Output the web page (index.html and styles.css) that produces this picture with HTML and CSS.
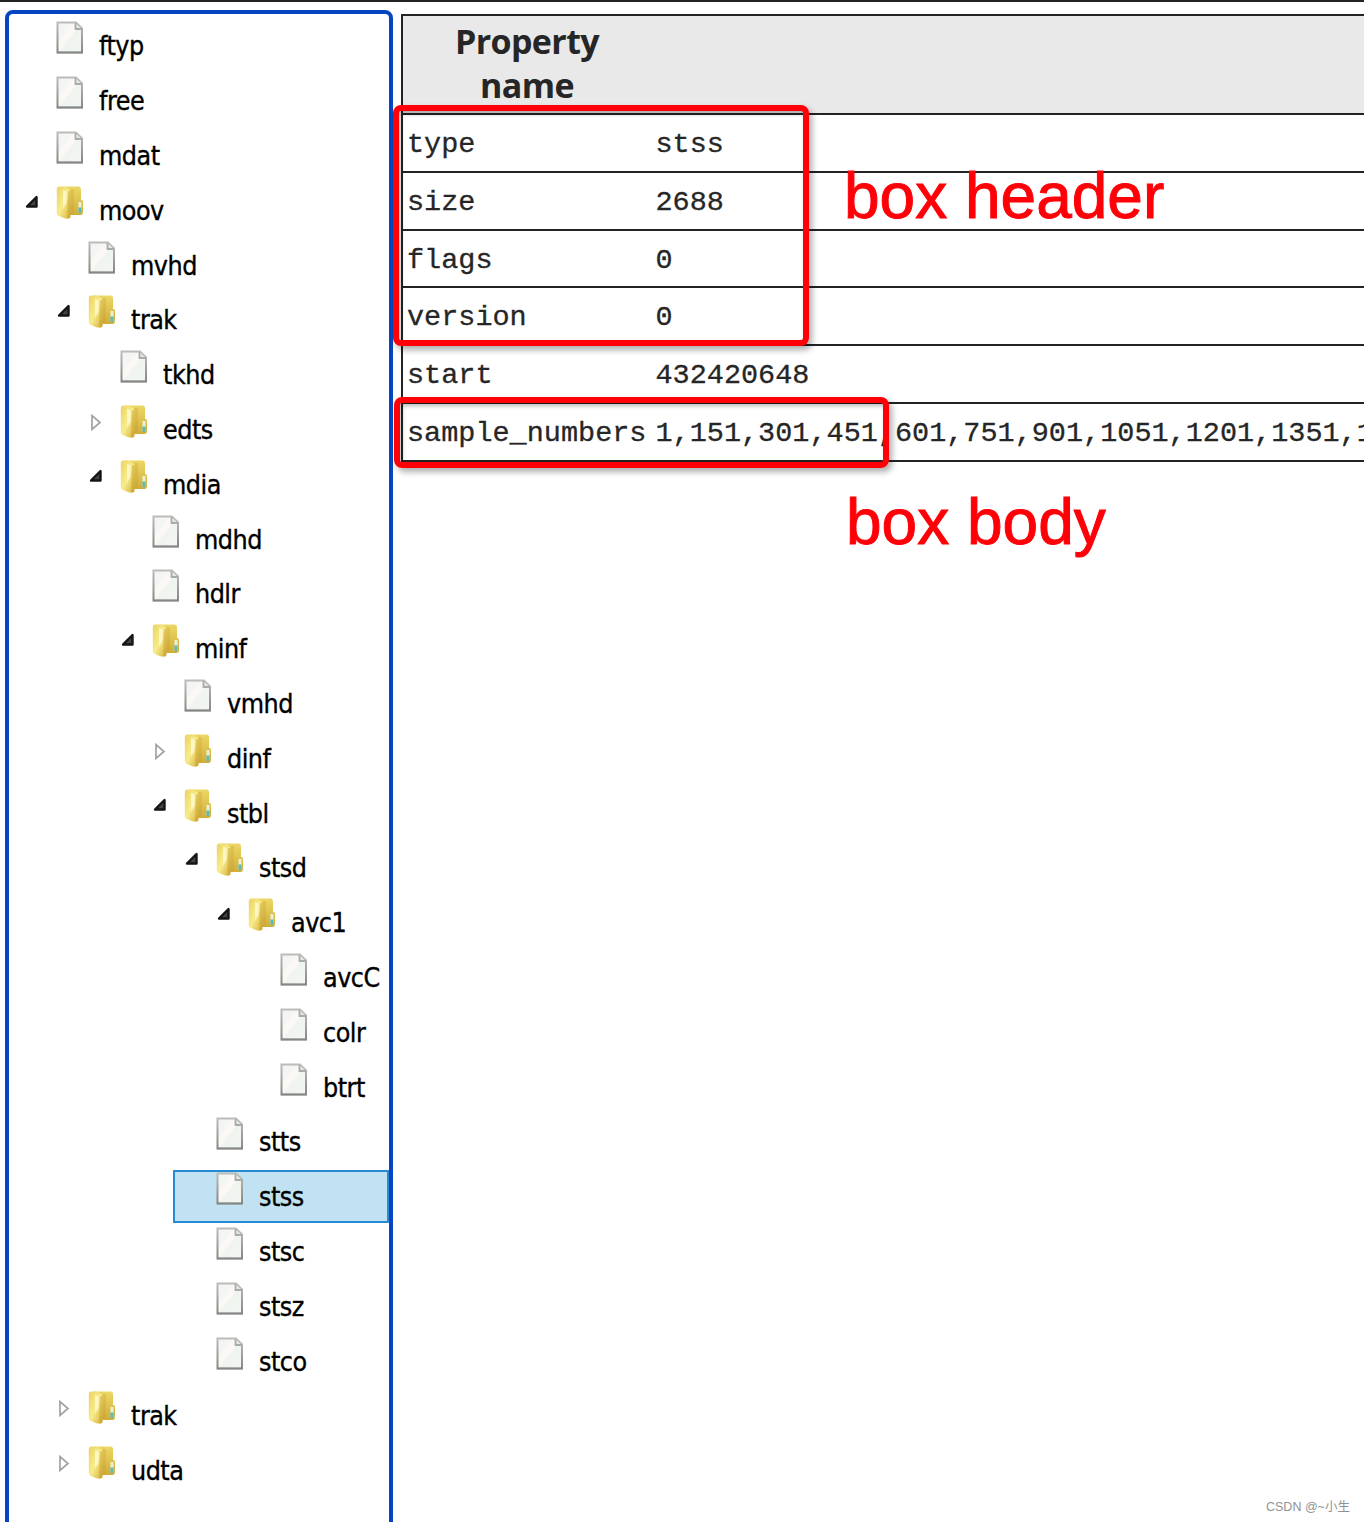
FILE: index.html
```html
<!DOCTYPE html>
<html lang="en">
<head>
<meta charset="utf-8">
<title>MP4 box viewer</title>
<link rel="stylesheet" href="styles.css">
</head>
<body>
<svg width="0" height="0" class="defs">
  <defs>
    <linearGradient id="paper" x1="0" y1="0" x2="1" y2="1"><stop offset="0" stop-color="#f1f5f1"/><stop offset=".3" stop-color="#f3f6f3"/><stop offset=".38" stop-color="#fcf8f5"/><stop offset=".48" stop-color="#fbf8f5"/><stop offset=".54" stop-color="#eff4ef"/><stop offset="1" stop-color="#f3f7f3"/></linearGradient>
    <linearGradient id="edge" x1="0" y1="0" x2="0" y2="1"><stop offset="0" stop-color="#babdba"/><stop offset="1" stop-color="#868886"/></linearGradient>
    <linearGradient id="front" x1="0" y1="0" x2="1" y2="1"><stop offset="0" stop-color="#ecd263"/><stop offset=".5" stop-color="#f6ec8c"/><stop offset="1" stop-color="#d6ae38"/></linearGradient>
    <linearGradient id="back" x1="0" y1="0" x2="0" y2="1"><stop offset="0" stop-color="#edd765"/><stop offset="1" stop-color="#d0ad38"/></linearGradient>
    <symbol id="file" viewBox="0 0 28 34">
      <path d="M1.5 1.5H20L26 7.5V31.5H1.5Z" fill="url(#paper)" stroke="url(#edge)" stroke-width="2"/>
      <path d="M1 31.5H26.5" stroke="#858785" stroke-width="1.6"/>
      <path d="M19.5 2V8H26" fill="#e4e7e4" stroke="#a9aca9" stroke-width="1.8"/>
    </symbol>
    <symbol id="folder" viewBox="0 0 28 34">
      <path d="M5 .5H23Q25 .5 25 3V14H25.500Q27 14 27 16V25.500Q27 29 24.500 29H11V2Z" fill="url(#back)"/>
      <path d="M14 3H18V28H14Z" fill="#c79b2c" opacity=".28"/>
      <path d="M3 .5Q.8 .5 .8 3V27Q.8 29.500 3 30L7.500 32Q14.500 34 14.500 30.500V5Q14.500 3.500 12.500 2.800L8 .5Z" fill="url(#front)"/>
      <path d="M7 4L10.500 5V17L7 23Z" fill="#fffce0" opacity=".7"/>
      <path d="M12 5L14.500 5V31Q13 32.500 11 32Z" fill="#c4952a" opacity=".4"/>
      <path d="M22.500 16H25.500V27H22.500Z" fill="#e9f0d5"/>
      <path d="M22.500 21.500H25.500V27H22.500Z" fill="#5fb9b2"/>
    </symbol>
    <symbol id="open" viewBox="0 0 14 14"><path d="M11.500 2V11.500H2Z" fill="#444" stroke="#151515" stroke-width="2.400" stroke-linejoin="round"/></symbol>
    <symbol id="closed" viewBox="0 0 14 20"><path d="M2 2.500V16.500L10 9.500Z" fill="#fff" stroke="#a2a2a2" stroke-width="1.700"/></symbol>
  </defs>
</svg>
<main class="viewer">
  <nav class="tree">
    <ul>
      <li><div class="row"><i></i><svg class="icon"><use href="#file"/></svg><span>ftyp</span></div></li>
      <li><div class="row"><i></i><svg class="icon"><use href="#file"/></svg><span>free</span></div></li>
      <li><div class="row"><i></i><svg class="icon"><use href="#file"/></svg><span>mdat</span></div></li>
      <li><div class="row"><i><svg class="open"><use href="#open"/></svg></i><svg class="icon"><use href="#folder"/></svg><span>moov</span></div>
        <ul>
          <li><div class="row"><i></i><svg class="icon"><use href="#file"/></svg><span>mvhd</span></div></li>
          <li><div class="row"><i><svg class="open"><use href="#open"/></svg></i><svg class="icon"><use href="#folder"/></svg><span>trak</span></div>
            <ul>
              <li><div class="row"><i></i><svg class="icon"><use href="#file"/></svg><span>tkhd</span></div></li>
              <li><div class="row"><i><svg class="closed"><use href="#closed"/></svg></i><svg class="icon"><use href="#folder"/></svg><span>edts</span></div></li>
              <li><div class="row"><i><svg class="open"><use href="#open"/></svg></i><svg class="icon"><use href="#folder"/></svg><span>mdia</span></div>
                <ul>
                  <li><div class="row"><i></i><svg class="icon"><use href="#file"/></svg><span>mdhd</span></div></li>
                  <li><div class="row"><i></i><svg class="icon"><use href="#file"/></svg><span>hdlr</span></div></li>
                  <li><div class="row"><i><svg class="open"><use href="#open"/></svg></i><svg class="icon"><use href="#folder"/></svg><span>minf</span></div>
                    <ul>
                      <li><div class="row"><i></i><svg class="icon"><use href="#file"/></svg><span>vmhd</span></div></li>
                      <li><div class="row"><i><svg class="closed"><use href="#closed"/></svg></i><svg class="icon"><use href="#folder"/></svg><span>dinf</span></div></li>
                      <li><div class="row"><i><svg class="open"><use href="#open"/></svg></i><svg class="icon"><use href="#folder"/></svg><span>stbl</span></div>
                        <ul>
                          <li><div class="row"><i><svg class="open"><use href="#open"/></svg></i><svg class="icon"><use href="#folder"/></svg><span>stsd</span></div>
                            <ul>
                              <li><div class="row"><i><svg class="open"><use href="#open"/></svg></i><svg class="icon"><use href="#folder"/></svg><span>avc1</span></div>
                                <ul>
                                  <li><div class="row"><i></i><svg class="icon"><use href="#file"/></svg><span>avcC</span></div></li>
                                  <li><div class="row"><i></i><svg class="icon"><use href="#file"/></svg><span>colr</span></div></li>
                                  <li><div class="row"><i></i><svg class="icon"><use href="#file"/></svg><span>btrt</span></div></li>
                                </ul>
                              </li>
                            </ul>
                          </li>
                          <li><div class="row"><i></i><svg class="icon"><use href="#file"/></svg><span>stts</span></div></li>
                          <li><div class="row selected"><i></i><svg class="icon"><use href="#file"/></svg><span>stss</span></div></li>
                          <li><div class="row"><i></i><svg class="icon"><use href="#file"/></svg><span>stsc</span></div></li>
                          <li><div class="row"><i></i><svg class="icon"><use href="#file"/></svg><span>stsz</span></div></li>
                          <li><div class="row"><i></i><svg class="icon"><use href="#file"/></svg><span>stco</span></div></li>
                        </ul>
                      </li>
                    </ul>
                  </li>
                </ul>
              </li>
            </ul>
          </li>
          <li><div class="row"><i><svg class="closed"><use href="#closed"/></svg></i><svg class="icon"><use href="#folder"/></svg><span>trak</span></div></li>
          <li><div class="row"><i><svg class="closed"><use href="#closed"/></svg></i><svg class="icon"><use href="#folder"/></svg><span>udta</span></div></li>
        </ul>
      </li>
    </ul>
  </nav>
  <section class="properties">
    <div class="head"><div class="title">Property<br>name</div></div>
    <div class="prop"><span>type</span><span>stss</span></div>
    <div class="prop"><span>size</span><span>2688</span></div>
    <div class="prop"><span>flags</span><span>0</span></div>
    <div class="prop"><span>version</span><span>0</span></div>
    <div class="prop"><span>start</span><span>432420648</span></div>
    <div class="prop"><span>sample_numbers</span><span>1,151,301,451,601,751,901,1051,1201,1351,1</span></div>
  </section>
  <div class="frame frame-header"></div>
  <div class="frame frame-body"></div>
  <div class="note note-header">box header</div>
  <div class="note note-body">box body</div>
  <div class="credit">CSDN @~小生</div>
</main>
</body>
</html>
```

FILE: styles.css
```css
* { box-sizing: border-box; }
body { margin: 0; background: #fff; overflow: hidden; }
.defs { position: absolute; }
.viewer {
  position: relative;
  display: flex;
  align-items: flex-start;
  gap: 8px;
  width: 1364px;
  height: 1522px;
  padding-left: 5px;
  border-top: 2px solid #232323;
  overflow: hidden;
}

.tree {
  flex: none;
  width: 388px;
  height: 1530px;
  margin-top: 8px;
  padding: 5.4px 0 0 4px;
  border: 4px solid #0645c1;
  border-radius: 8px;
  font: 26.6px/32px "DejaVu Sans Condensed", "DejaVu Sans", sans-serif;
  font-stretch: condensed;
  letter-spacing: -0.5px;
  -webkit-text-stroke: .35px #000;
  color: #000;
}
.tree ul { margin: 0; padding: 0; list-style: none; }
.tree ul ul { padding-left: 32px; }
.row {
  display: flex;
  align-items: flex-start;
  height: 53px;
  margin-bottom: 1.8px;
  border: 2px solid transparent;
}
.row.selected { background: #c1e2f3; border-color: #268bd2; }
.row i { flex: none; width: 41px; height: 40px; padding: 9px 0 0 10px; }
.row span { margin: 9px 0 0 15px; white-space: nowrap; }
.icon { flex: none; width: 28px; height: 34px; }
.open { display: block; width: 14px; height: 14px; }
.closed { display: block; width: 14px; height: 20px; margin: -1px 0 0 1px; }

.properties {
  flex: none;
  width: 980px;
  margin-top: 12px;
  border: solid #232323;
  border-width: 2px 0 0 2px;
  color: #262626;
  font: 28.5px/60px "Liberation Mono", monospace;
}
.head { height: 99px; background: #e9e9e9; border-bottom: 2px solid #232323; }
.title {
  width: 248px;
  padding-top: 3px;
  font: bold 34px/44px "Open Sans", "Noto Sans", sans-serif;
  letter-spacing: -0.6px;
  text-align: center;
}
.prop {
  display: grid;
  grid-template-columns: 248.5px 1fr;
  height: 57.8px;
  padding-left: 4px;
  border-bottom: 2px solid #232323;
  -webkit-text-stroke: .3px #262626;
  white-space: nowrap;
}

.frame {
  position: absolute;
  border: 6px solid #ff0008;
  border-radius: 8px;
  box-shadow: 3px 4px 6px rgba(0, 0, 0, .32), inset 2px 3px 4px rgba(0, 0, 0, .28);
}
.frame-header { left: 393px; top: 103px; width: 416px; height: 241px; }
.frame-body { left: 394px; top: 395px; width: 495px; height: 71px; }
.note {
  position: absolute;
  color: #ff0008;
  font: 64px/72px "Liberation Sans", Arial, sans-serif;
  -webkit-text-stroke: 1px #ff0008;
  white-space: nowrap;
}
.note-header { left: 844px; top: 158px; }
.note-body { left: 846px; top: 484px; }
.credit {
  position: absolute;
  left: 1266px;
  top: 1496px;
  color: #929292;
  font: 12.5px/18px "Liberation Sans", "Noto Sans CJK SC", sans-serif;
  white-space: nowrap;
}
```
